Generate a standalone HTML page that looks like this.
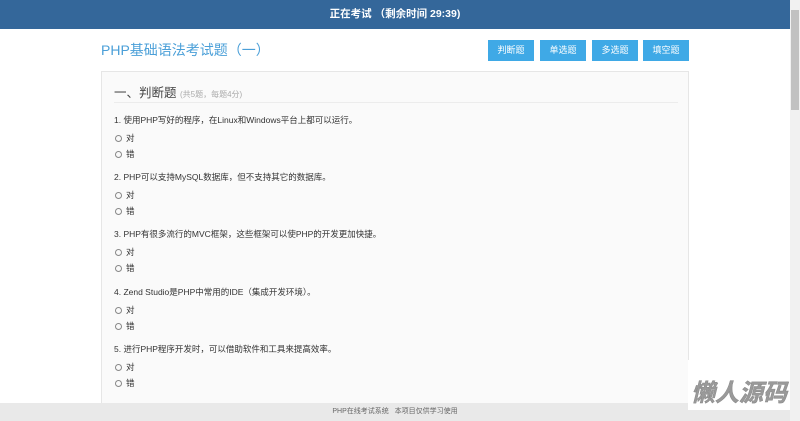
<!DOCTYPE html>
<html><head><meta charset="utf-8"><style>
*{margin:0;padding:0;box-sizing:border-box}
body{width:800px;height:421px;overflow:hidden;background:#fff;font-family:"Liberation Sans","Noto Sans CJK SC",sans-serif;position:relative}
.hd{position:absolute;left:0;top:0;width:790px;height:29px;background:#34679a;color:#fff;font-size:10.5px;font-weight:bold;text-align:center;line-height:29px}
.sb{position:absolute;left:790px;top:0;width:10px;height:421px;background:#f1f1f1}
.sb .th{position:absolute;left:1px;top:10px;width:8px;height:100px;background:#c1c1c1}
.title{position:absolute;left:101px;top:41px;font-size:14px;color:#4a9fd8;line-height:18px}
.btn{position:absolute;top:40px;width:46px;height:21px;background:#3fa9e6;color:#fff;font-size:9px;text-align:center;line-height:21px}
.panel{position:absolute;left:101px;top:71px;width:588px;height:340px;background:#fafafa;border:1px solid #e6e6e6}
.sec{position:absolute;left:12px;top:10px;width:564px;height:21px;border-bottom:1px solid #ececec;font-size:12.5px;color:#444}
.sec small{font-size:8px;color:#aaa}
.q{position:absolute;left:12px;font-size:8.5px;color:#333;white-space:nowrap}
.o{position:absolute;left:13px;font-size:8.5px;color:#333}
.o i{display:inline-block;width:7px;height:7px;border:1px solid #888;border-radius:50%;margin-right:4px;vertical-align:-1px}
.ft{position:absolute;left:0;top:403px;width:790px;height:18px;background:#e9e9e9;font-size:7px;color:#666;text-align:center;line-height:18px}
.wm{position:absolute;left:688px;top:360px;width:102px;height:50px;background:#fff}
.wm span{position:absolute;left:3px;top:20px;font-size:24px;font-weight:bold;font-style:italic;color:#9a9a9a;line-height:28px;-webkit-text-stroke:0.5px #888}
</style></head><body>
<div class="hd">正在考试 （剩余时间 29:39)</div>
<div class="title">PHP基础语法考试题（一）</div>
<div class="btn" style="left:488px">判断题</div>
<div class="btn" style="left:540px">单选题</div>
<div class="btn" style="left:592px">多选题</div>
<div class="btn" style="left:643px">填空题</div>
<div class="panel">
<div class="sec">一、判断题 <small>(共5题，每题4分)</small></div>
<div class="q" style="top:42px">1. 使用PHP写好的程序，在Linux和Windows平台上都可以运行。</div>
<div class="o" style="top:60px"><i></i>对</div>
<div class="o" style="top:76px"><i></i>错</div>
<div class="q" style="top:99px">2. PHP可以支持MySQL数据库，但不支持其它的数据库。</div>
<div class="o" style="top:117px"><i></i>对</div>
<div class="o" style="top:133px"><i></i>错</div>
<div class="q" style="top:156px">3. PHP有很多流行的MVC框架，这些框架可以使PHP的开发更加快捷。</div>
<div class="o" style="top:174px"><i></i>对</div>
<div class="o" style="top:190px"><i></i>错</div>
<div class="q" style="top:214px">4. Zend Studio是PHP中常用的IDE（集成开发环境）。</div>
<div class="o" style="top:232px"><i></i>对</div>
<div class="o" style="top:248px"><i></i>错</div>
<div class="q" style="top:271px">5. 进行PHP程序开发时，可以借助软件和工具来提高效率。</div>
<div class="o" style="top:289px"><i></i>对</div>
<div class="o" style="top:305px"><i></i>错</div>
</div>
<div class="ft">PHP在线考试系统 &nbsp; 本项目仅供学习使用</div>
<div class="wm"><span>懒人源码</span></div>
<div class="sb"><div class="th"></div></div>
</body></html>
